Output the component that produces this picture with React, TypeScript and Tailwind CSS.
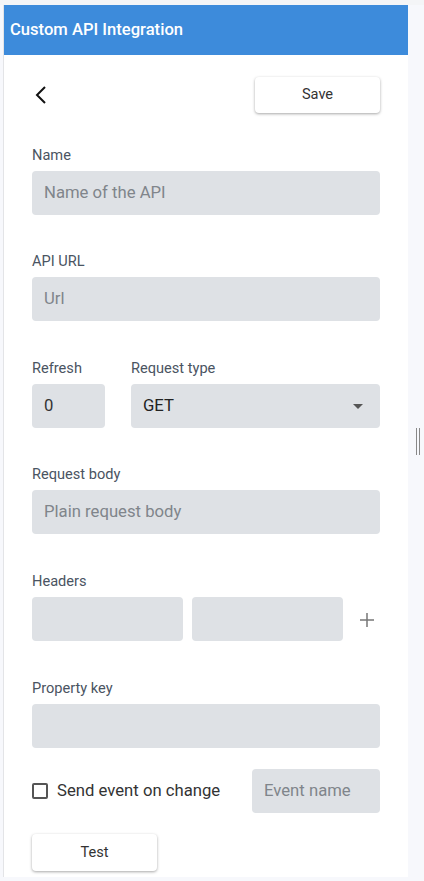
import React from "react";

const font = { fontFamily: "Roboto, 'Noto Sans', sans-serif" };

function Label({ children }: { children: React.ReactNode }) {
  return <div className="text-[14.6px] leading-[16px] text-[#4a5462] mb-2">{children}</div>;
}

function Field({ placeholder, className = "" }: { placeholder?: string; className?: string }) {
  return (
    <div className={`h-[44px] flex-none rounded-[4px] bg-[#dee1e5] flex items-center px-3 text-[16.7px] text-[#80858b] ${className}`}>
      {placeholder}
    </div>
  );
}

export default function App() {
  return (
    <div className="w-[424px] h-[881px] bg-[#f7f8fc] relative overflow-hidden" style={font}>
      <div className="h-[5px] bg-[#f4f5f7]" />
      <div className="ml-[3px] w-[405px] h-[872px] bg-white border-l border-[#e3e4e7] flex flex-col">
        <div className="h-[50px] bg-[#3d8bdb] flex items-center pl-[6px] text-white text-[16.6px] font-medium">
          Custom API Integration
        </div>
        <div className="pl-[28px] pr-[28px] flex flex-col">
          <div className="flex items-center justify-between mt-[22px] h-[36px]">
            <svg width="14" height="20" viewBox="0 0 14 20" className="ml-[2px]">
              <path d="M11 2 L3 10 L11 18" fill="none" stroke="#111" strokeWidth="2" />
            </svg>
            <button className="w-[125px] h-[36px] rounded-[4px] bg-white text-[14.6px] text-[#333] shadow-[0_1px_3px_rgba(0,0,0,0.35)]">
              Save
            </button>
          </div>

          <div className="mt-[34px]">
            <Label>Name</Label>
            <Field placeholder="Name of the API" />
          </div>

          <div className="mt-[38px]">
            <Label>API URL</Label>
            <Field placeholder="Url" />
          </div>

          <div className="mt-[39px] flex gap-[26px]">
            <div className="w-[73px]">
              <Label>Refresh</Label>
              <Field placeholder="0" className="!text-[#333]" />
            </div>
            <div className="flex-1">
              <Label>Request type</Label>
              <div className="h-[44px] rounded-[4px] bg-[#dee1e5] flex items-center justify-between pl-3 pr-[17px] text-[16.7px] text-[#222]">
                <span>GET</span>
                <svg width="10" height="5" viewBox="0 0 10 5">
                  <path d="M0 0 L10 0 L5 5 Z" fill="#555" />
                </svg>
              </div>
            </div>
          </div>

          <div className="mt-[38px]">
            <Label>Request body</Label>
            <Field placeholder="Plain request body" />
          </div>

          <div className="mt-[39px]">
            <Label>Headers</Label>
            <div className="flex items-center gap-[9px]">
              <Field className="w-[151px]" />
              <Field className="w-[151px]" />
              <svg width="16" height="16" viewBox="0 0 16 16" className="ml-[7px] mt-[2px] flex-none">
                <path d="M8 1 V15 M1 8 H15" stroke="#777" strokeWidth="1.5" />
              </svg>
            </div>
          </div>

          <div className="mt-[39px]">
            <Label>Property key</Label>
            <Field />
          </div>

          <div className="mt-[21px] flex items-center justify-between">
            <div className="flex items-center">
              <div className="w-[16px] h-[16px] border-2 border-[#555] rounded-[2px]" />
              <span className="ml-[9px] text-[16.7px] text-[#333]">Send event on change</span>
            </div>
            <Field placeholder="Event name" className="w-[128px]" />
          </div>

          <div className="mt-[21px]">
            <button className="w-[125px] h-[37px] rounded-[4px] bg-white text-[14.6px] text-[#333] shadow-[0_1px_3px_rgba(0,0,0,0.35)]">
              Test
            </button>
          </div>
        </div>
      </div>
      <div className="absolute left-[416px] top-[428px] w-[4px] h-[27px] flex justify-between">
        <div className="w-[1px] h-full bg-[#888]" />
        <div className="w-[1px] h-full bg-[#888]" />
      </div>
    </div>
  );
}
